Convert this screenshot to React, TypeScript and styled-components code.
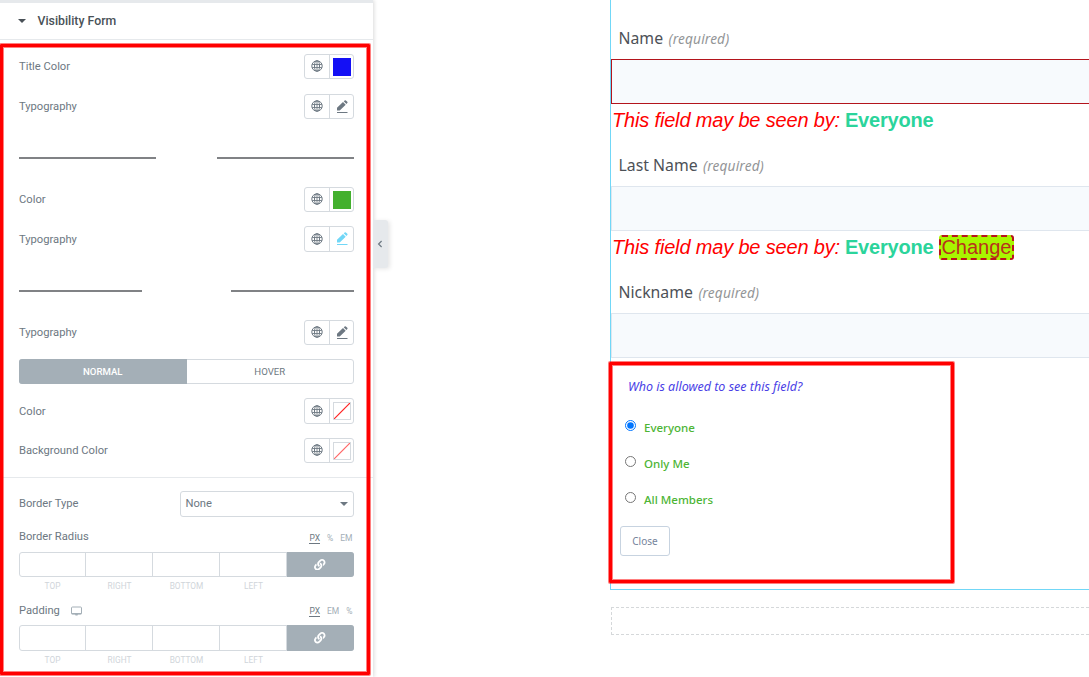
import React from "react";
import styled, { createGlobalStyle } from "styled-components";
import { FaLink } from "react-icons/fa";

const GlobalStyle = createGlobalStyle`
  * {
    box-sizing: border-box;
  }
  body {
    margin: 0;
    background: #fff;
    overflow: hidden;
    font-family: Roboto, sans-serif;
  }
`;

const Page = styled.div`
  display: flex;
  width: 1089px;
  height: 677px;
  overflow: hidden;
  background: #fff;
`;

/* Editor panel */

const Panel = styled.aside`
  position: relative;
  flex: none;
  width: 373px;
  height: 677px;
  border-top: 3px solid #e6e9ec;
  box-shadow: 1px 0 4px rgba(0, 0, 0, 0.15);
  color: #6d7882;
  font-size: 11.2px;
`;

const PanelHeader = styled.div`
  display: flex;
  align-items: center;
  height: 37px;
  padding: 0 0 1px 18px;
  border-bottom: 1px solid #e6e9ec;
  color: #495157;
  font-size: 12.3px;
  font-weight: 500;
`;

const Caret = styled.span<{ $color?: string }>`
  width: 0;
  height: 0;
  border: 4px solid transparent;
  border-top-color: ${(p) => p.$color || "#495157"};
  border-bottom-width: 0;
`;

const HeaderTitle = styled.span`
  margin-left: 11.5px;
`;

const Controls = styled.div`
  display: flex;
  flex-direction: column;
  padding: 14px 19px 0;
`;

const Row = styled.div<{ $gap?: number; $height?: number }>`
  display: flex;
  align-items: center;
  justify-content: space-between;
  height: ${(p) => p.$height || 25}px;
  margin-bottom: ${(p) => p.$gap ?? 14}px;
`;

const Label = styled.span<{ $low?: boolean }>`
  display: flex;
  align-items: center;
  gap: 11px;
  line-height: 13px;
  margin-bottom: ${(p) => (p.$low ? -1 : 1)}px;
`;

const ButtonPair = styled.div`
  display: flex;
  width: 50px;
  height: 100%;
  border: 1px solid #d5dadf;
  border-radius: 3px;
`;

const PairCell = styled.div<{ $color?: string }>`
  display: flex;
  flex: none;
  width: 24px;
  align-items: center;
  justify-content: center;
  padding-bottom: 1px;
  color: ${(p) => p.$color || "#6d7882"};

  & + & {
    padding: 0 0 0 1px;
    border-left: 1px solid #d5dadf;
  }
`;

const Swatch = styled.span<{ $color?: string }>`
  width: 18px;
  height: 18px;
  background: ${(p) => p.$color || "transparent"};
  border: ${(p) => (p.$color ? "none" : "1px solid #d5dadf")};

  svg {
    display: block;
  }
`;

const Divided = styled.div<{ $line: number; $gap: number }>`
  display: flex;
  justify-content: space-between;
  margin-bottom: ${(p) => p.$gap}px;

  &::before,
  &::after {
    content: "";
    width: ${(p) => p.$line}px;
    height: 2px;
    background: #808285;
  }
`;

const Tabs = styled.div`
  display: flex;
  height: 25px;
  margin-bottom: 14px;
  border: 1px solid #d5dadf;
  border-radius: 3px;
`;

const Tab = styled.div<{ $active?: boolean }>`
  display: flex;
  align-items: center;
  justify-content: center;
  width: ${(p) => (p.$active ? 168 : 167)}px;
  margin: ${(p) => (p.$active ? "-1px 0 -1px -1px" : "0")};
  background: ${(p) => (p.$active ? "#a4afb7" : "transparent")};
  border-radius: 3px 0 0 3px;
  color: ${(p) => (p.$active ? "#fff" : "#6d7882")};
  font-size: 9.6px;
  font-weight: ${(p) => (p.$active ? 500 : 400)};
`;

const Separator = styled.div`
  height: 1px;
  margin: 0 -19px 13px;
  background: #e6e9ec;
`;

const Select = styled.div`
  display: flex;
  align-items: center;
  justify-content: space-between;
  width: 174px;
  height: 26px;
  padding: 0 5px 0 4.5px;
  border: 1px solid #d5dadf;
  border-radius: 3px;
`;

const Units = styled.div`
  display: flex;
  gap: 7px;
  margin: 2px 1.5px 0 0;
  color: #a4afb7;
  font-size: 8.5px;
  line-height: 10px;
`;

const Unit = styled.span<{ $active?: boolean }>`
  color: ${(p) => (p.$active ? "#6d7882" : "#a4afb7")};
  border-bottom: 1px solid ${(p) => (p.$active ? "#6d7882" : "transparent")};
`;

const Dimensions = styled.div<{ $height: number }>`
  display: flex;
  height: ${(p) => p.$height}px;
  border: 1px solid #d5dadf;
  border-radius: 3px;
`;

const DimensionInput = styled.div`
  width: 67px;
  border-right: 1px solid #d5dadf;

  &:first-child {
    width: 66px;
  }
`;

const LinkButton = styled.div`
  display: flex;
  flex: 1;
  align-items: center;
  justify-content: center;
  margin: -1px -1px -1px 0;
  padding-right: 1px;
  border-radius: 0 3px 3px 0;
  background: #a4afb7;
  color: #fff;
`;

const DimensionLabels = styled.div<{ $gap: number }>`
  display: flex;
  margin: 4px 0 ${(p) => p.$gap}px;
  color: #d0d5da;
  font-size: 8.3px;
  line-height: 10px;
  text-align: center;

  span {
    width: 67px;
  }
`;

const Handle = styled.div`
  position: absolute;
  left: 373px;
  top: 217px;
  display: flex;
  align-items: center;
  justify-content: center;
  width: 15px;
  height: 48px;
  padding-right: 1px;
  background: #e6e9ec;
  border-radius: 0 3px 3px 0;
  box-shadow: 2px 1px 4px rgba(0, 0, 0, 0.1);
`;

/* Red annotation frames drawn over the page */

const Highlight = styled.div<{ $x: number; $y: number; $w: number; $h: number }>`
  position: absolute;
  left: ${(p) => p.$x}px;
  top: ${(p) => p.$y}px;
  width: ${(p) => p.$w}px;
  height: ${(p) => p.$h}px;
  border: 3px solid #f00;
  border-radius: 1px;
  box-shadow: 0 0 0 1px rgba(255, 0, 0, 0.5), inset 0 0 0 1px rgba(255, 0, 0, 0.5);
  pointer-events: none;
`;

/* Preview */

const Preview = styled.main`
  flex: 1;
  padding-left: 237px;
  font-family: "Noto Sans", sans-serif;
`;

const Widget = styled.section`
  height: 590px;
  border-left: 1px solid #71d7f7;
  border-bottom: 1px solid #71d7f7;
`;

const Field = styled.div<{ $height?: number }>`
  height: ${(p) => p.$height || 127}px;
`;

const FieldLabel = styled.div`
  display: flex;
  align-items: baseline;
  height: 59px;
  padding: 26px 0 0 7.5px;
  color: #4d5157;
  font-size: 15.8px;
  line-height: 24px;
`;

const Required = styled.em`
  margin-left: 5.5px;
  color: #939597;
  font-size: 13.7px;
  letter-spacing: 0.15px;
`;

const FieldInput = styled.div<{ $invalid?: boolean }>`
  height: 45px;
  background: #f7fafd;
  border: 1px solid ${(p) => (p.$invalid ? "#b3141c" : "#dfe6ee")};
  border-right: none;
`;

const VisibilityNote = styled.p`
  display: flex;
  align-items: center;
  height: 23px;
  margin: 5px 0 0 1px;
  color: #f00;
  font-family: "Liberation Sans", Arial, sans-serif;
  font-size: 20px;
  line-height: 23px;

  em {
    letter-spacing: -0.17px;
  }

  strong {
    margin-left: 5px;
    color: #2bd49b;
    letter-spacing: -0.2px;
  }
`;

const ChangeButton = styled.span`
  width: 75px;
  height: 25px;
  margin-left: 5.5px;
  padding-left: 0.5px;
  border: 2px dashed #b8141c;
  border-radius: 3px;
  background: #a8f600;
  color: #b8321c;
  line-height: 21px;
`;

const Question = styled.div`
  padding: 20px 0 0 17px;
  color: #4a3fe6;
  font-size: 12.5px;
  font-style: italic;
  line-height: 18px;
`;

const Options = styled.div`
  display: flex;
  flex-direction: column;
  gap: 18px;
  padding: 24px 0 0 14px;
`;

const Option = styled.label`
  display: flex;
  height: 18px;
  color: #4db535;
  font-size: 11.5px;
  font-weight: 500;
  line-height: 16px;

  input {
    width: 11px;
    height: 11px;
    margin: 0 8px 0 0;
  }
`;

const CloseButton = styled.button`
  display: block;
  width: 50px;
  height: 30px;
  margin: 16px 0 0 9px;
  padding: 0;
  border: 1px solid #c7d3e0;
  border-radius: 3px;
  background: #fff;
  color: #75849b;
  font-family: "Noto Sans", sans-serif;
  font-size: 10px;
`;

const DropZone = styled.div`
  height: 28px;
  margin: 17px -10px 0 1px;
  border: 1px dashed #d5d8da;
`;

const GlobeIcon = () => (
  <svg width="12" height="12" viewBox="0 0 12 12" fill="none" stroke="currentColor">
    <circle cx="6" cy="6" r="5.2" />
    <ellipse cx="6" cy="6" rx="2.5" ry="5.2" />
    <path d="M6 .8v10.4M1.2 4.5h9.6M1.2 7.5h9.6" strokeWidth=".9" />
  </svg>
);

const PencilIcon = () => (
  <svg width="13" height="14" viewBox="0 0 13 14" fill="currentColor">
    <path d="M1 10.500V7.800L7 2l2.700 2.700L3.700 10.500zM7.700 1.300 8.700.4q.6-.5 1.200 0l1.400 1.400q.5.600 0 1.200l-.9.900z" />
    <path d="M1 12h10.500v1H1z" />
  </svg>
);

const DesktopIcon = () => (
  <svg width="11" height="10" viewBox="0 0 11 10">
    <rect x=".5" y="1" width="10" height="7" rx="1" fill="none" stroke="#a4afb7" />
    <path d="M.5 7h10v1.2H7L6.5 9.5h-2L4 8.200H.5z" fill="#a4afb7" />
  </svg>
);

const ChevronLeft = () => (
  <svg width="6" height="8" viewBox="0 0 6 8" fill="none" stroke="#6d7882" strokeWidth="1.2">
    <path d="M4.600 1 1.600 4l3 3" />
  </svg>
);

type ControlProps = {
  label: string;
  children: React.ReactNode;
  color?: string;
  gap?: number;
  height?: number;
};

function Control({ label, children, color, gap, height }: ControlProps) {
  return (
    <Row $gap={gap} $height={height}>
      <Label $low={height === 26}>{label}</Label>
      <ButtonPair>
        <PairCell>
          <GlobeIcon />
        </PairCell>
        <PairCell $color={color}>{children}</PairCell>
      </ButtonPair>
    </Row>
  );
}

function EmptySwatch({ color }: { color: string }) {
  return (
    <Swatch>
      <svg width="16" height="16">
        <path d="M0 16 16 0" stroke={color} strokeWidth="1.2" />
      </svg>
    </Swatch>
  );
}

function DimensionControl({ height, gap }: { height: number; gap: number }) {
  return (
    <>
      <Dimensions $height={height}>
        <DimensionInput />
        <DimensionInput />
        <DimensionInput />
        <DimensionInput />
        <LinkButton>
          <FaLink size={11.5} />
        </LinkButton>
      </Dimensions>
      <DimensionLabels $gap={gap}>
        <span>TOP</span>
        <span>RIGHT</span>
        <span>BOTTOM</span>
        <span>LEFT</span>
      </DimensionLabels>
    </>
  );
}

function StylePanel() {
  return (
    <Panel>
      <PanelHeader>
        <Caret />
        <HeaderTitle>Visibility Form</HeaderTitle>
      </PanelHeader>
      <Controls>
        <Control label="Title Color" gap={15}>
          <Swatch $color="#1410f5" />
        </Control>
        <Control label="Typography" gap={38}>
          <PencilIcon />
        </Control>
        <Divided $line={137} $gap={28} />
        <Control label="Color">
          <Swatch $color="#43b02e" />
        </Control>
        <Control label="Typography" color="#71d7f7" height={26} gap={38}>
          <PencilIcon />
        </Control>
        <Divided $line={123} $gap={28} />
        <Control label="Typography">
          <PencilIcon />
        </Control>
        <Tabs>
          <Tab $active>NORMAL</Tab>
          <Tab>HOVER</Tab>
        </Tabs>
        <Control label="Color" height={26}>
          <EmptySwatch color="#f22" />
        </Control>
        <Control label="Background Color">
          <EmptySwatch color="#f66" />
        </Control>
        <Separator />
        <Row $height={26} $gap={11}>
          <Label>Border Type</Label>
          <Select>
            <Label>None</Label>
            <Caret $color="#6d7882" />
          </Select>
        </Row>
        <Row $height={18} $gap={6}>
          <Label>Border Radius</Label>
          <Units>
            <Unit $active>PX</Unit>
            <Unit>%</Unit>
            <Unit>EM</Unit>
          </Units>
        </Row>
        <DimensionControl height={25} gap={10} />
        <Row $height={18} $gap={6}>
          <Label $low>
            Padding
            <DesktopIcon />
          </Label>
          <Units>
            <Unit $active>PX</Unit>
            <Unit>EM</Unit>
            <Unit>%</Unit>
          </Units>
        </Row>
        <DimensionControl height={26} gap={0} />
      </Controls>
      <Handle>
        <ChevronLeft />
      </Handle>
    </Panel>
  );
}

type ProfileFieldProps = {
  label: string;
  height?: number;
  invalid?: boolean;
  note?: boolean;
  editable?: boolean;
};

function ProfileField({ label, height, invalid, note, editable }: ProfileFieldProps) {
  return (
    <Field $height={height}>
      <FieldLabel>
        {label}
        <Required>(required)</Required>
      </FieldLabel>
      <FieldInput $invalid={invalid} />
      {note && (
        <VisibilityNote>
          <em>This field may be seen by:</em>
          <strong>Everyone</strong>
          {editable && <ChangeButton>Change</ChangeButton>}
        </VisibilityNote>
      )}
    </Field>
  );
}

function App() {
  return (
    <Page>
      <GlobalStyle />
      <StylePanel />
      <Preview>
        <Widget>
          <ProfileField label="Name" invalid note />
          <ProfileField label="Last Name" note editable />
          <ProfileField label="Nickname" height={104} />
          <Question>Who is allowed to see this field?</Question>
          <Options>
            <Option>
              <input type="radio" name="visibility" defaultChecked />
              Everyone
            </Option>
            <Option>
              <input type="radio" name="visibility" />
              Only Me
            </Option>
            <Option>
              <input type="radio" name="visibility" />
              All Members
            </Option>
          </Options>
          <CloseButton>Close</CloseButton>
        </Widget>
        <DropZone />
      </Preview>
      <Highlight $x={0} $y={44} $w={370} $h={631} />
      <Highlight $x={609} $y={362} $w={345} $h={221} />
    </Page>
  );
}

export default App;
